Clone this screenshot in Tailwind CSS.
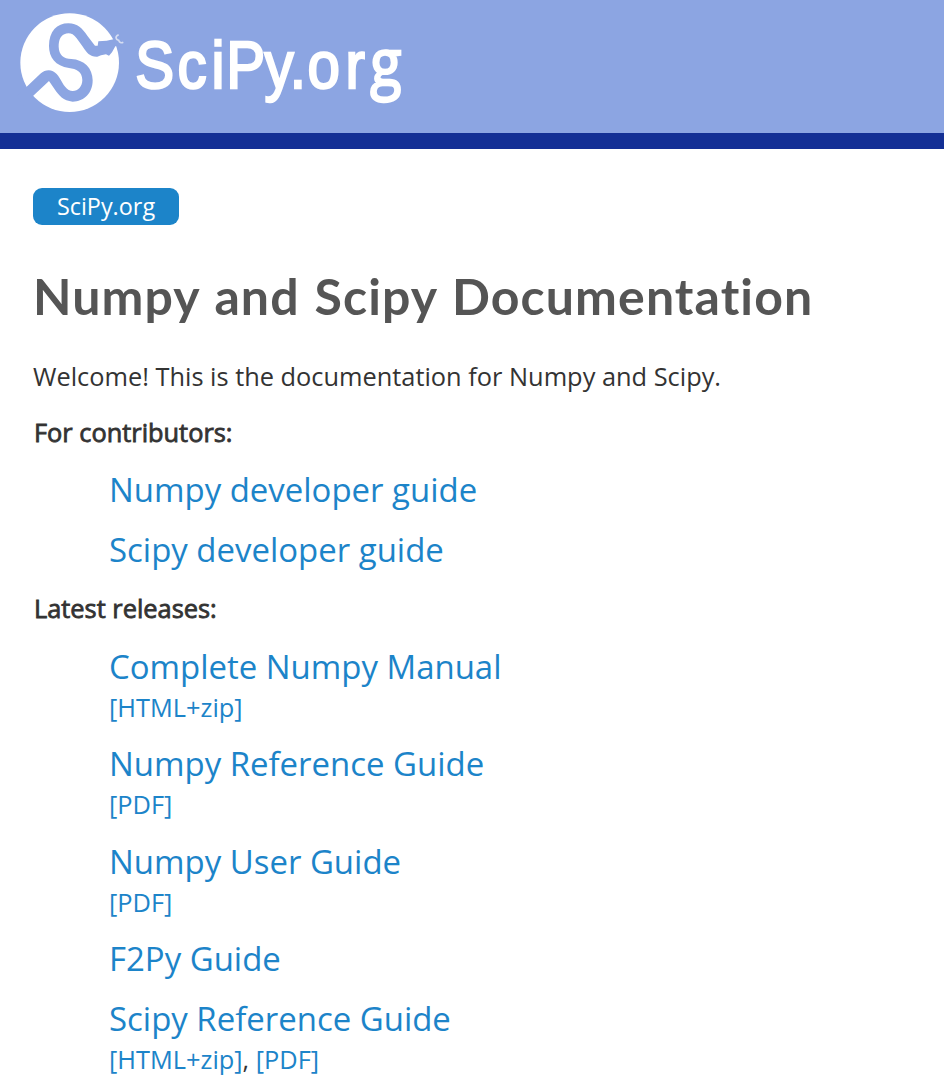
<!DOCTYPE html>
<html lang="en">
<head>
<meta charset="utf-8">
<title>Numpy and Scipy Documentation</title>
<script src="https://cdn.jsdelivr.net/npm/@tailwindcss/browser@4"></script>
</head>
<body class="bg-white text-[#333333] font-['Open_Sans',sans-serif] text-[25.37px] leading-9 h-[1092px] overflow-hidden">
<header class="h-[149px] bg-[#8ca5e2] border-b-[16px] border-[#132f95]">
<svg class="block" width="420" height="133" viewBox="0 0 420 133" role="img" aria-label="SciPy.org">
<g transform="scale(.33333)">
<circle cx="209" cy="188" r="148" fill="#fff"/>
<path fill="#8ca5e2" d="M50 288L80 260L121 221C137 207 157 207 170 222C184 238 190 260 206 270C226 280 247 264 247 240C247 216 229 206 207 204C166 198 147 172 147 138C147 94 171 70 205 70C233 70 247 86 262 107L285 137L293 137L295 124L320 122L340 118L362 110L362 136L346 139L336 157L327 167L318 163L303 166L292 170C270 171 260 158 249 141L230 115C218 98 204 98 193 103C180 109 176 123 176 140C177 166 191 176 214 177C252 179 278 204 278 241C278 280 252 305 218 305C190 303 176 286 164 268L147 243L99 288L68 318Z"/>
<path d="M356 104C344 109 347 119 356 121C359 128 363 130 370 127" fill="none" stroke="#d5ddf2" stroke-width="5"/>
</g>
<text transform="scale(.87 1)" y="88" x="155.5 204 243 260 304 333 353.5 397 425.5" font-family="Liberation Sans, sans-serif" font-size="67" fill="#fff" stroke="#fff" stroke-width="2.4">SciPy.or<tspan font-family="Open Sans, sans-serif" font-size="66" dy="-2">g</tspan></text>
</svg>
</header>
<main class="pl-[33px] pt-[39px]">
<nav class="flex h-[37px] w-[146px] items-center justify-center rounded-[9px] bg-[#1c84c9] pb-[2px] text-[23.4px] text-white"><a>SciPy.org</a></nav>
<h1 class="mt-[41px] h-[60px] whitespace-nowrap font-['Lato',sans-serif] text-[50px] font-bold leading-[60px] tracking-[1.1px] [word-spacing:1.7px] text-[#555555]">Numpy and Scipy Documentation</h1>
<p class="mt-[32px] h-9">Welcome! This is the documentation for Numpy and Scipy.</p>
<p class="mt-5 h-9 pl-px [-webkit-text-stroke:0.8px_#333333]">For contributors:</p>
<div class="flex flex-col pl-[76px] pt-[17px] text-[#1c84c9] text-[32.95px] leading-[46px]">
<a class="h-[60px]">Numpy developer guide</a>
<a class="h-[60px]">Scipy developer guide</a>
</div>
<p class="mt-[3px] h-9 pl-px [-webkit-text-stroke:0.8px_#333333]">Latest releases:</p>
<div class="flex flex-col pl-[76px] pt-[18px] text-[#1c84c9] text-[32.95px] leading-[46px]">
<div class="h-[97px]"><a>Complete Numpy Manual</a><div class="-mt-px text-[25.37px] leading-9"><a>[HTML+zip]</a></div></div>
<div class="h-[98px]"><a>Numpy Reference Guide</a><div class="-mt-px text-[25.37px] leading-9"><a>[PDF]</a></div></div>
<div class="h-[97px]"><a>Numpy User Guide</a><div class="-mt-px text-[25.37px] leading-9"><a>[PDF]</a></div></div>
<a class="h-[60px]">F2Py Guide</a>
<div class="h-[97px]"><a>Scipy Reference Guide</a><div class="-mt-px text-[25.37px] leading-9"><a>[HTML+zip]</a><span class="text-[#333333]">, </span><a>[PDF]</a></div></div>
</div>
</main>
</body>
</html>
